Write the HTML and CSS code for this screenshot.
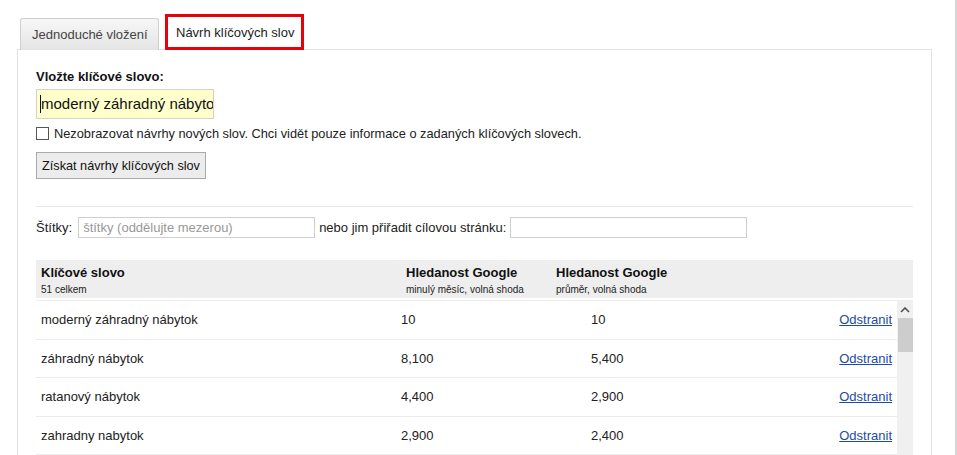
FILE: index.html
```html
<!DOCTYPE html>
<html lang="cs">
<head>
    <meta charset="UTF-8">
    <title>Návrh klíčových slov</title>
    <link rel="stylesheet" href="styles.css">
</head>
<body>
<div class="page">
    <div class="tabs">
        <div class="tab">Jednoduché vložení</div>
        <div class="tab active">Návrh klíčových slov</div>
    </div>

    <div class="panel">
        <div class="label">Vložte klíčové slovo:</div>
        <div class="keyword-input"><span class="caret"></span>moderný záhradný nábytok</div>

        <label class="check-row">
            <span class="checkbox"></span>
            Nezobrazovat návrhy nových slov. Chci vidět pouze informace o zadaných klíčových slovech.
        </label>

        <button class="btn">Získat návrhy klíčových slov</button>

        <div class="divider"></div>

        <div class="tags-row">
            <span>Štítky:</span>
            <input class="field tags" type="text" placeholder="štítky (oddělujte mezerou)">
            <span>nebo jim přiřadit cílovou stránku:</span>
            <input class="field url" type="text">
        </div>

        <div class="table">
            <div class="thead">
                <div>
                    <div class="th">Klíčové slovo</div>
                    <div class="sub">51 celkem</div>
                </div>
                <div>
                    <div class="th">Hledanost Google</div>
                    <div class="sub">minulý měsíc, volná shoda</div>
                </div>
                <div>
                    <div class="th">Hledanost Google</div>
                    <div class="sub">průměr, volná shoda</div>
                </div>
            </div>

            <div class="tbody">
                <div class="rows">
                    <div class="row">
                        <span>moderný záhradný nábytok</span>
                        <span>10</span>
                        <span>10</span>
                        <a href="#">Odstranit</a>
                    </div>
                    <div class="row">
                        <span>záhradný nábytok</span>
                        <span>8,100</span>
                        <span>5,400</span>
                        <a href="#">Odstranit</a>
                    </div>
                    <div class="row">
                        <span>ratanový nábytok</span>
                        <span>4,400</span>
                        <span>2,900</span>
                        <a href="#">Odstranit</a>
                    </div>
                    <div class="row">
                        <span>zahradny nabytok</span>
                        <span>2,900</span>
                        <span>2,400</span>
                        <a href="#">Odstranit</a>
                    </div>
                </div>
                <div class="scrollbar">
                    <svg class="arrow" width="10" height="6" viewBox="0 0 10 6">
                        <path d="M1 5 L5 1 L9 5" fill="none" stroke="#505050" stroke-width="1.6"/>
                    </svg>
                    <div class="thumb"></div>
                </div>
            </div>
        </div>
    </div>
</div>
</body>
</html>
```

FILE: styles.css
```css
body {
    margin: 0;
    background: #ffffff;
    font-family: "Liberation Sans", Arial, sans-serif;
    color: #222;
    overflow: hidden;
}

.page {
    width: 938px;
    height: 441px;
    padding: 14px 0 0 17px;
    border-right: 2px solid #d6d6d6;
    overflow: hidden;
}

/* Tabs */
.tabs {
    display: flex;
    align-items: flex-end;
    gap: 6px;
    margin-left: 3px;
    height: 36px;
    position: relative;
    z-index: 2;
}

.tab {
    box-sizing: border-box;
    width: 139px;
    height: 32px;
    padding: 8px 0 0 11px;
    font-size: 13px;
    color: #444;
    background: linear-gradient(#f7f7f7, #e4e4e4);
    border: 1px solid #cfcfcf;
    border-bottom: none;
    border-radius: 3px 3px 0 0;
}

.tab.active {
    width: 139px;
    height: 36px;
    padding: 8px 0 0 8px;
    color: #222;
    background: #ffffff;
    border: 3px solid #e8000b;
    border-radius: 0;
}

/* Panel */
.panel {
    width: 877px;
    height: 420px;
    padding: 19px 18px 0 18px;
    border: 1px solid #e2e2e2;
    border-bottom: none;
    margin-top: -1px;
}

.label {
    font-size: 13px;
    font-weight: bold;
    color: #111;
    line-height: 16px;
}

.keyword-input {
    box-sizing: border-box;
    width: 178px;
    height: 30px;
    margin-top: 4px;
    padding: 5px 0 0 3px;
    background: #ffffcc;
    border: 1px solid #d4d4c4;
    font-size: 15px;
    color: #111;
    white-space: nowrap;
    overflow: hidden;
}

.caret {
    display: inline-block;
    width: 1px;
    height: 18px;
    background: #111;
    vertical-align: -4px;
}

.check-row {
    display: flex;
    align-items: center;
    gap: 5px;
    margin-top: 8px;
    font-size: 12.8px;
    color: #222;
    line-height: 13px;
}

.checkbox {
    width: 11px;
    height: 11px;
    border: 1px solid #555;
    background: #fff;
}

.btn {
    display: block;
    box-sizing: border-box;
    width: 170px;
    height: 27px;
    margin-top: 12px;
    padding: 0;
    font-family: "Liberation Sans", Arial, sans-serif;
    font-size: 12.7px;
    color: #111;
    background: #ececec;
    border: 1px solid #aaa;
    border-radius: 0;
}

.divider {
    height: 1px;
    margin-top: 27px;
    background: #e8e8e8;
}

.tags-row {
    display: flex;
    align-items: center;
    gap: 4px;
    margin-top: 10px;
    font-size: 13px;
    color: #222;
}

.field {
    box-sizing: border-box;
    height: 21px;
    padding: 0 4px;
    border: 1px solid #cfcfcf;
    font-family: "Liberation Sans", Arial, sans-serif;
    font-size: 13px;
    outline: none;
}

.field::placeholder {
    color: #999;
}

.field.tags {
    width: 237px;
    margin-left: 2px;
}

.field.url {
    width: 237px;
}

/* Table */
.table {
    margin-top: 22px;
}

.thead {
    display: grid;
    grid-template-columns: 365px 150px 1fr;
    height: 38px;
    padding: 4px 0 0 5px;
    box-sizing: border-box;
    background: #eeeeee;
    margin-bottom: 2px;
}

.th {
    font-size: 13px;
    font-weight: bold;
    color: #111;
    line-height: 17px;
}

.sub {
    font-size: 10px;
    color: #222;
    margin-top: 3px;
}

.tbody {
    display: flex;
    border-top: 1px solid #ececec;
}

.rows {
    flex: 1;
}

.row {
    display: grid;
    grid-template-columns: 360px 190px 1fr auto;
    align-items: center;
    height: 37.5px;
    padding: 0 5px;
    border-bottom: 1px solid #ececec;
    font-size: 13px;
    color: #222;
}

.row a {
    color: #1c4ba8;
    text-decoration: underline;
}

.scrollbar {
    width: 16px;
    background: #f0f0f0;
    display: flex;
    flex-direction: column;
    align-items: center;
}

.arrow {
    margin-top: 6px;
}

.thumb {
    width: 15px;
    height: 34px;
    margin-top: 5px;
    background: #cdcdcd;
}
```
